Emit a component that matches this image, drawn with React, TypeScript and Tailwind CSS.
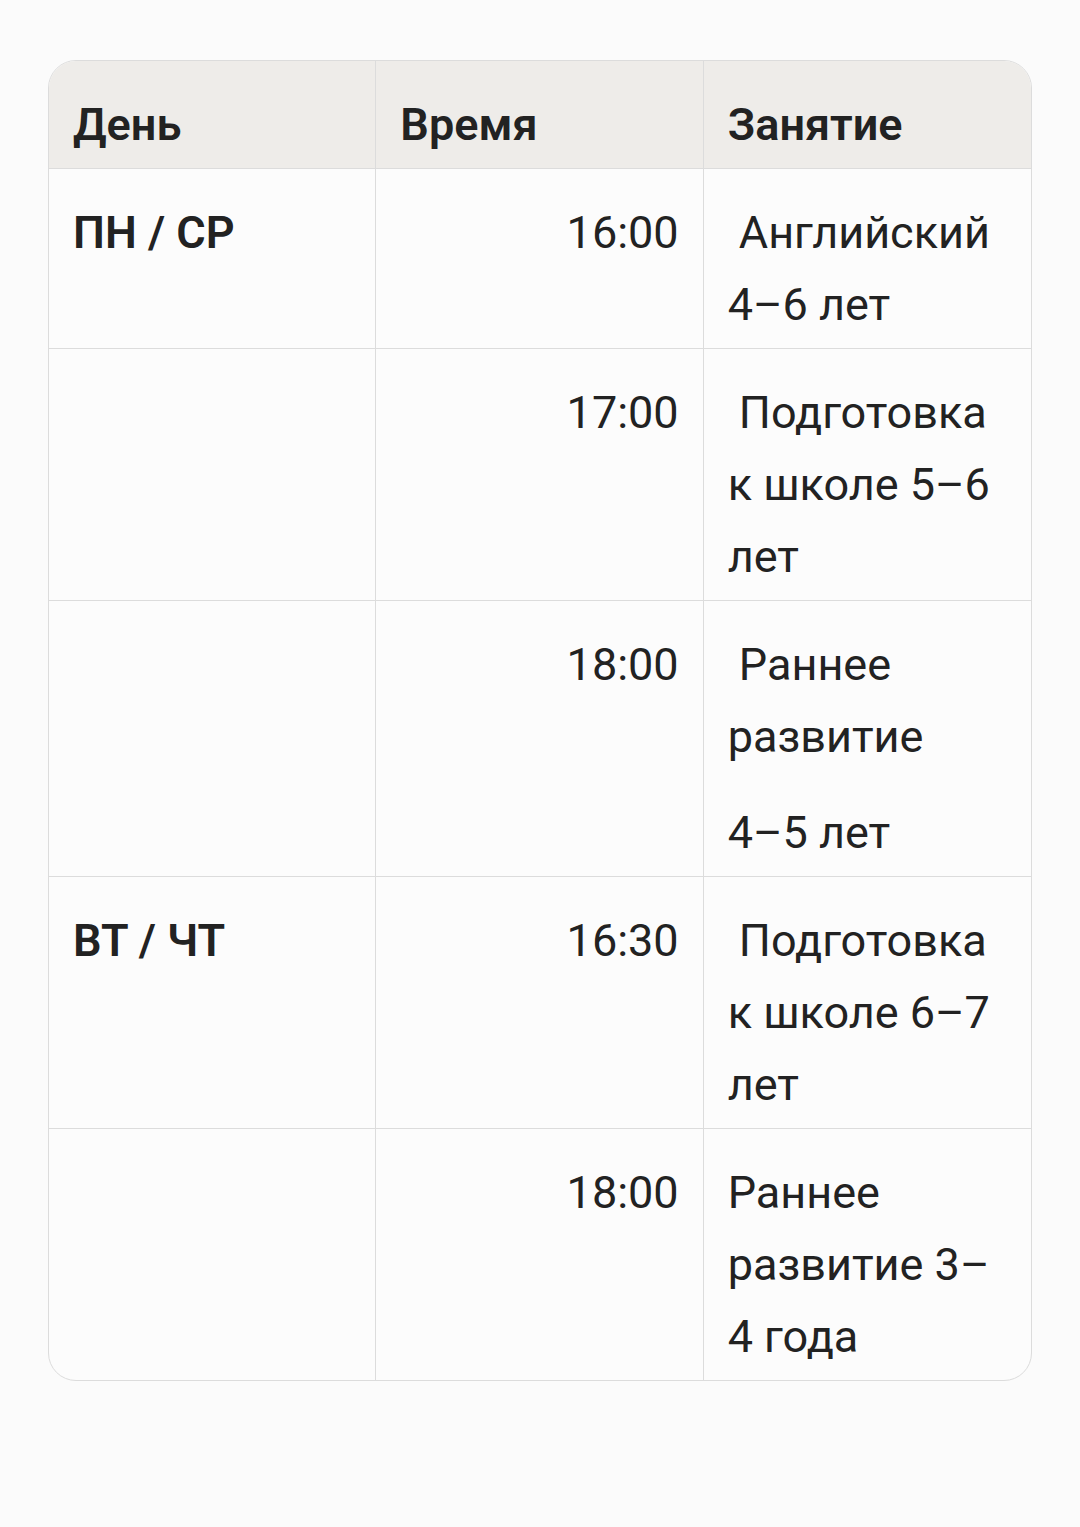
import React from 'react';

type Row = {
  day?: string;
  time: string;
  lines: string[];
  extra?: string;
};

const rows: Row[] = [
  { day: 'ПН / СР', time: '16:00', lines: ['\u00a0Английский', '4–6 лет'] },
  { time: '17:00', lines: ['\u00a0Подготовка', 'к школе 5–6', 'лет'] },
  { time: '18:00', lines: ['\u00a0Раннее', 'развитие'], extra: '4–5 лет' },
  { day: 'ВТ / ЧТ', time: '16:30', lines: ['\u00a0Подготовка', 'к школе 6–7', 'лет'] },
  { time: '18:00', lines: ['Раннее', 'развитие 3–', '4 года'] },
];

const cell = 'px-6 pt-[28px] pb-[7px]';

export default function App() {
  return (
    <div
      className="min-h-screen bg-[#fbfbfb] px-12 pt-[60px] text-[#222222]"
      style={{ fontFamily: 'Roboto, "Noto Sans", sans-serif' }}
    >
      <div className="overflow-hidden rounded-[28px] border border-[#dcdcdc] bg-[#fcfcfc] text-[45px] leading-[72px]">
        {/* Header */}
        <div className="grid grid-cols-3 bg-[#eeece9] font-semibold">
          <div className={`border-r border-[#dcdcdc] ${cell}`}>День</div>
          <div className={`border-r border-[#dcdcdc] ${cell}`}>Время</div>
          <div className={cell}>Занятие</div>
        </div>

        {rows.map((row, i) => (
          <div key={i} className="grid grid-cols-3 border-t border-[#dcdcdc]">
            <div className={`border-r border-[#dcdcdc] font-semibold ${cell}`}>{row.day ?? ''}</div>
            <div className={`border-r border-[#dcdcdc] text-right ${cell}`}>{row.time}</div>
            <div className={`whitespace-nowrap ${cell}`}>
              <p>
                {row.lines.map((l, j) => (
                  <span key={j} className="block">
                    {l}
                  </span>
                ))}
              </p>
              {row.extra && <p className="mt-6">{row.extra}</p>}
            </div>
          </div>
        ))}
      </div>
    </div>
  );
}
